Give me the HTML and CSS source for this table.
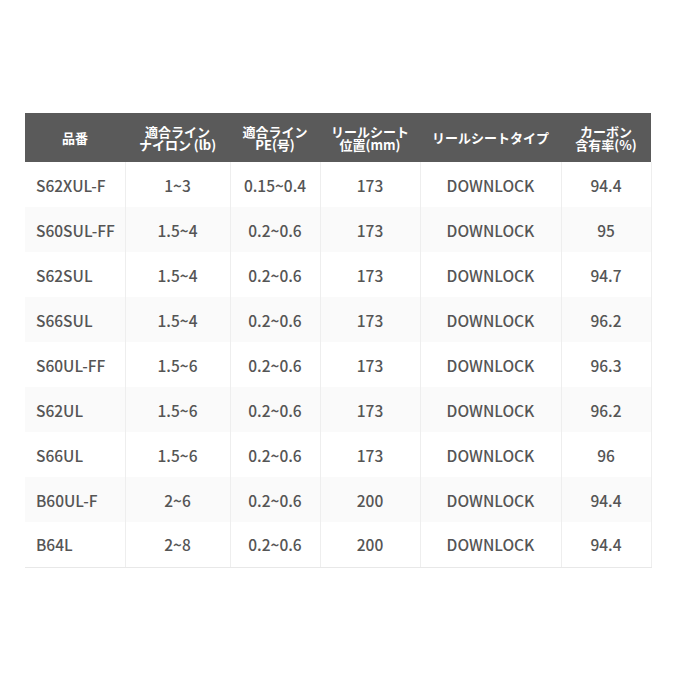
FILE: index.html
```html
<!DOCTYPE html>
<html lang="ja">
<head>
<meta charset="utf-8">
<link rel="stylesheet" href="styles.css">
</head>
<body>
<div class="wrap">
<table class="spec">
<colgroup>
<col class="c1"><col class="c2"><col class="c3"><col class="c4"><col class="c5"><col class="c6">
</colgroup>
<thead>
<tr>
<th>品番</th>
<th>適合ライン<br>ナイロン (lb)</th>
<th>適合ライン<br>PE(号)</th>
<th>リールシート<br>位置(mm)</th>
<th>リールシートタイプ</th>
<th>カーボン<br>含有率(%)</th>
</tr>
</thead>
<tbody>
<tr><td>S62XUL-F</td><td>1~3</td><td>0.15~0.4</td><td>173</td><td>DOWNLOCK</td><td>94.4</td></tr>
<tr><td>S60SUL-FF</td><td>1.5~4</td><td>0.2~0.6</td><td>173</td><td>DOWNLOCK</td><td>95</td></tr>
<tr><td>S62SUL</td><td>1.5~4</td><td>0.2~0.6</td><td>173</td><td>DOWNLOCK</td><td>94.7</td></tr>
<tr><td>S66SUL</td><td>1.5~4</td><td>0.2~0.6</td><td>173</td><td>DOWNLOCK</td><td>96.2</td></tr>
<tr><td>S60UL-FF</td><td>1.5~6</td><td>0.2~0.6</td><td>173</td><td>DOWNLOCK</td><td>96.3</td></tr>
<tr><td>S62UL</td><td>1.5~6</td><td>0.2~0.6</td><td>173</td><td>DOWNLOCK</td><td>96.2</td></tr>
<tr><td>S66UL</td><td>1.5~6</td><td>0.2~0.6</td><td>173</td><td>DOWNLOCK</td><td>96</td></tr>
<tr><td>B60UL-F</td><td>2~6</td><td>0.2~0.6</td><td>200</td><td>DOWNLOCK</td><td>94.4</td></tr>
<tr><td>B64L</td><td>2~8</td><td>0.2~0.6</td><td>200</td><td>DOWNLOCK</td><td>94.4</td></tr>
</tbody>
</table>
</div>
</body>
</html>
```
FILE: styles.css
```css
html, body {
  margin: 0;
  padding: 0;
  background: #ffffff;
}
body {
  font-family: "Noto Sans CJK JP", "Noto Sans", sans-serif;
  color: #555555;
}
.wrap {
  padding: 113px 29px 0 25px;
}
.spec {
  width: 626px;
  border-collapse: collapse;
  table-layout: fixed;
}
.c1 { width: 100px; }
.c2 { width: 105px; }
.c3 { width: 90px; }
.c4 { width: 100px; }
.c5 { width: 141px; }
.c6 { width: 90px; }
.spec th {
  background: #5a5a5a;
  color: #ffffff;
  font-size: 13px;
  font-weight: 700;
  line-height: 13px;
  height: 49px;
  padding: 0;
  text-align: center;
  vertical-align: middle;
  box-sizing: border-box;
}
.spec td {
  height: 45px;
  padding: 0;
  font-size: 15.5px;
  font-weight: 500;
  text-align: center;
  vertical-align: middle;
  border-left: 1px solid #eeeeee;
  border-right: 1px solid #eeeeee;
  box-sizing: border-box;
}
.spec td:first-child {
  text-align: left;
  padding-left: 11px;
  border-left: none;
}
.spec tbody tr:nth-child(even) td {
  background: #fafafa;
}
.spec tbody tr:last-child td {
  border-bottom: 1px solid #e8e8e8;
}
```
